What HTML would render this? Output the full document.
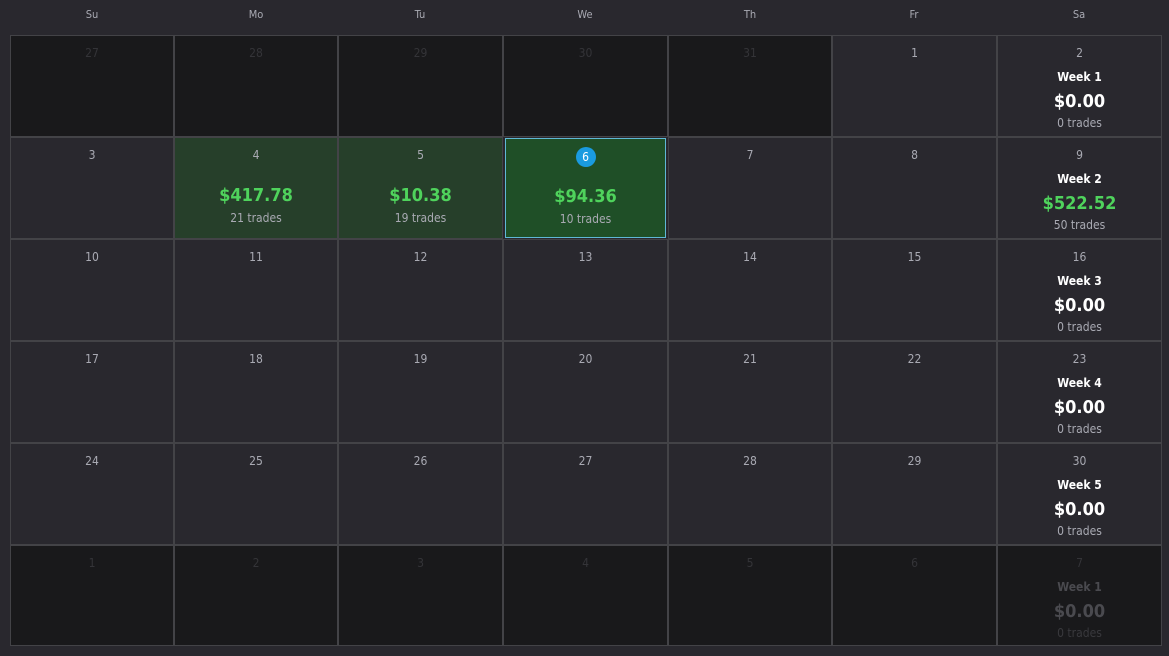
<!DOCTYPE html>
<html><head><meta charset="utf-8"><style>
body{margin:0;width:1169px;height:656px;background:#29282e;overflow:hidden;font-family:"DejaVu Sans Condensed","DejaVu Sans",sans-serif;font-stretch:condensed;}
.h{position:absolute;top:8px;width:164px;text-align:center;color:#a9aab3;font-size:11px;}
.c{position:absolute;box-sizing:border-box;border:1px solid #434347;background:#29282e;text-align:center;color:#a9aab3;}
.o{background:#19191b;color:#343438;}
.g{background:#263f2a;}
.t{background:#1f4f27;border:1px solid #5fb8d6;}
.d{position:absolute;top:10px;left:0;right:0;font-size:12px;}
.a{position:absolute;top:47px;left:0;right:0;font-size:18px;font-weight:bold;color:#4fd35c;}
.n{position:absolute;top:73px;left:0;right:0;font-size:12px;color:#a9aab3;}
.w{position:absolute;top:34px;left:0;right:0;font-size:12px;font-weight:bold;color:#fff;}
.wa{position:absolute;top:55px;left:0;right:0;font-size:18px;font-weight:bold;color:#fff;}
.wn{position:absolute;top:80px;left:0;right:0;font-size:12px;color:#a9aab3;}
.o .w,.o .wa{color:#4a4a4f}.o .wn{color:#39393d}
.badge{display:inline-block;width:20px;height:20px;line-height:20px;border-radius:50%;background:#1a9be0;color:#fff;margin-top:-2px}
</style></head><body>
<div id="r"></div>
<script>
var xs=[10,174,338,503,668,832,997,1162],ys=[35,137,239,341,443,545,646];
var names=["Su","Mo","Tu","We","Th","Fr","Sa"],h="";
for(var i=0;i<7;i++)h+='<div class="h" style="left:'+xs[i]+'px">'+names[i]+'</div>';
var days=[[27,28,29,30,31,1,2],[3,4,5,6,7,8,9],[10,11,12,13,14,15,16],[17,18,19,20,21,22,23],[24,25,26,27,28,29,30],[1,2,3,4,5,6,7]];
var data={"1_1":["$417.78","21 trades"],"1_2":["$10.38","19 trades"],"1_3":["$94.36","10 trades"]};
var weeks=[["Week 1","$0.00","0 trades"],["Week 2","$522.52","50 trades"],["Week 3","$0.00","0 trades"],["Week 4","$0.00","0 trades"],["Week 5","$0.00","0 trades"],["Week 1","$0.00","0 trades"]];
for(var r=0;r<6;r++)for(var c=0;c<7;c++){
var out=(r==0&&c<5)||r==5;var cls="c"+(out?" o":"");var k=r+"_"+c;
if(data[k])cls+=(k=="1_3"?" t":" g");
var inner=k=="1_3"?'<div class="d"><span class="badge">6</span></div>':'<div class="d">'+days[r][c]+'</div>';
if(data[k])inner+='<div class="a">'+data[k][0]+'</div><div class="n">'+data[k][1]+'</div>';
if(c==6){var w=weeks[r];inner+='<div class="w">'+w[0]+'</div><div class="wa" style="'+(r==1?'color:#4fd35c':'')+'">'+w[1]+'</div><div class="wn">'+w[2]+'</div>';}
var l=xs[c],t=ys[r],wd=xs[c+1]-xs[c],ht=ys[r+1]-ys[r];
if(k=="1_3"){l+=2;t+=1;wd-=4;ht-=2;}
h+='<div class="'+cls+'" style="left:'+l+'px;top:'+t+'px;width:'+wd+'px;height:'+ht+'px">'+inner+'</div>';}
document.getElementById("r").innerHTML=h;
</script>
</body></html>
